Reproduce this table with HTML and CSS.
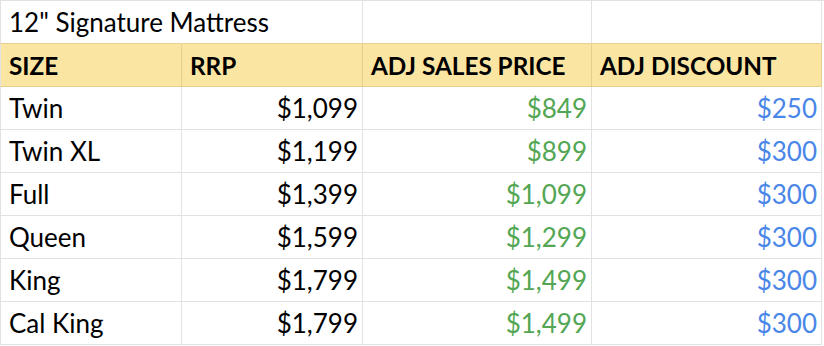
FILE: index.html
```html
<!DOCTYPE html>
<html>
<head>
<meta charset="utf-8">
<link rel="stylesheet" href="styles.css">
</head>
<body>
<div class="sheet">
  <div class="row title-row">
    <div class="cell spill">12" Signature Mattress</div>
    <div class="cell"></div>
    <div class="cell"></div>
    <div class="cell"></div>
  </div>
  <div class="row head">
    <div class="cell">SIZE</div>
    <div class="cell">RRP</div>
    <div class="cell">ADJ SALES PRICE</div>
    <div class="cell">ADJ DISCOUNT</div>
  </div>
  <div class="row">
    <div class="cell">Twin</div>
    <div class="cell num">$1,099</div>
    <div class="cell num green">$849</div>
    <div class="cell num blue">$250</div>
  </div>
  <div class="row">
    <div class="cell">Twin XL</div>
    <div class="cell num">$1,199</div>
    <div class="cell num green">$899</div>
    <div class="cell num blue">$300</div>
  </div>
  <div class="row">
    <div class="cell">Full</div>
    <div class="cell num">$1,399</div>
    <div class="cell num green">$1,099</div>
    <div class="cell num blue">$300</div>
  </div>
  <div class="row">
    <div class="cell">Queen</div>
    <div class="cell num">$1,599</div>
    <div class="cell num green">$1,299</div>
    <div class="cell num blue">$300</div>
  </div>
  <div class="row">
    <div class="cell">King</div>
    <div class="cell num">$1,799</div>
    <div class="cell num green">$1,499</div>
    <div class="cell num blue">$300</div>
  </div>
  <div class="row">
    <div class="cell">Cal King</div>
    <div class="cell num">$1,799</div>
    <div class="cell num green">$1,499</div>
    <div class="cell num blue">$300</div>
  </div>
</div>
</body>
</html>
```

FILE: styles.css
```css
html, body {
  margin: 0;
  padding: 0;
  background: #ffffff;
  overflow: hidden;
}

.sheet {
  width: 824px;
  height: 346px;
  overflow: hidden;
  border-top: 1px solid #e2e2e2;
  box-sizing: border-box;
  font-family: "Lato", "Open Sans", sans-serif;
  font-size: 26px;
  color: #000000;
}

.row {
  display: grid;
  grid-template-columns: 182px 181px 229px 230px 2px;
  height: 43px;
}

.cell {
  box-sizing: border-box;
  height: 43px;
  border-right: 1px solid #e2e2e2;
  border-bottom: 1px solid #e2e2e2;
  padding: 0 4px 5px 8px;
  display: flex;
  align-items: flex-end;
  white-space: nowrap;
  overflow: hidden;
}

.row .cell:first-child {
  border-left: 1px solid #e2e2e2;
}

.title-row .cell {
  border-bottom-color: #e5d08d;
}

.title-row .spill {
  overflow: visible;
  border-right-color: transparent;
  position: relative;
  z-index: 1;
}

.head .cell {
  background: #fbe5a2;
  border-color: #e5d08d;
  font-weight: 700;
  font-size: 24.3px;
  padding-bottom: 6px;
}

.num {
  justify-content: flex-end;
}

.green {
  color: #53a653;
}

.blue {
  color: #4a86e8;
}
```
